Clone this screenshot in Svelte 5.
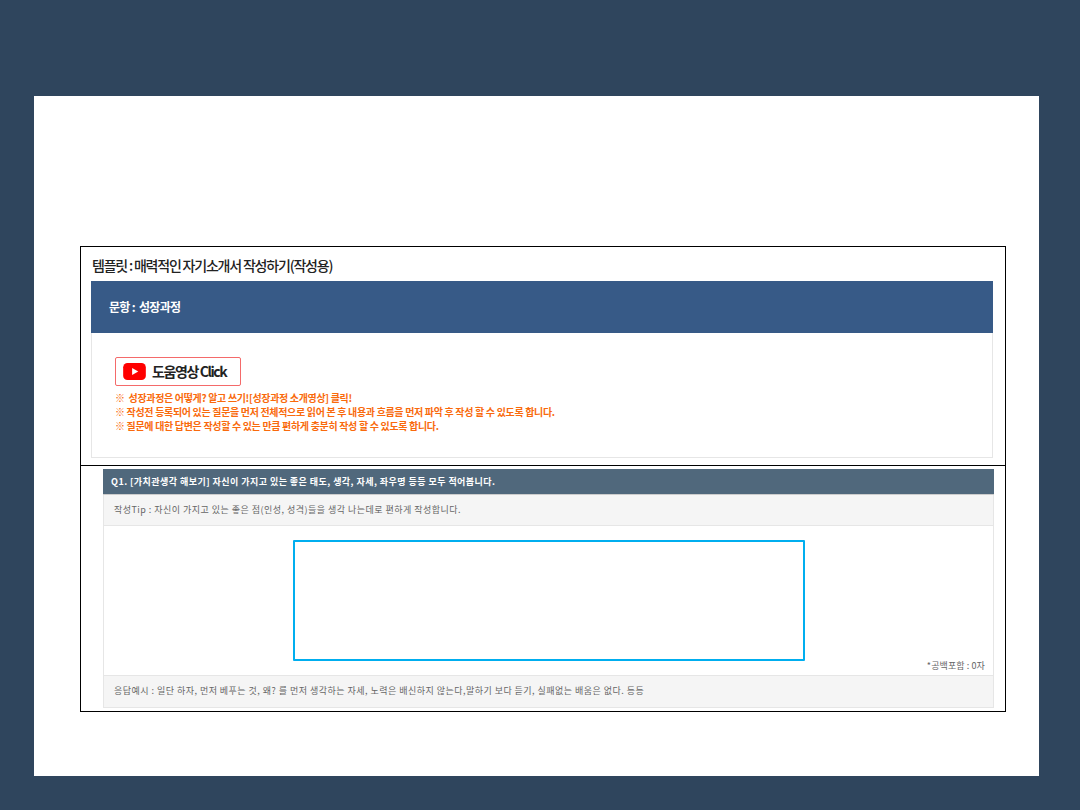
<script>
    const notes = [
        "※  성장과정은 어떻게? 알고 쓰기![성장과정 소개영상] 클릭!",
        "※ 작성전 등록되어 있는 질문을 먼저 전체적으로 읽어 본 후 내용과 흐름을 먼저 파악 후 작성 할 수 있도록 합니다.",
        "※ 질문에 대한 답변은 작성할 수 있는 만큼 편하게 충분히 작성 할 수 있도록 합니다."
    ];
</script>

<div class="page">
    <div class="panel">
        <section class="template">
            <h1>템플릿 : 매력적인 자기소개서 작성하기(작성용)</h1>
            <div class="banner">문항 :&nbsp; 성장과정</div>
            <div class="guide">
                <button class="help">
                    <svg width="23" height="17" viewBox="0 0 24 18">
                        <rect width="24" height="18" rx="4.5" fill="#ff0000" />
                        <path d="M9.5 5.2 L16 9 L9.5 12.8 Z" fill="#fff" />
                    </svg>
                    <span>도움영상 Click</span>
                </button>
                {#each notes as note}
                    <p class="note">{note}</p>
                {/each}
            </div>
        </section>
        <section class="question">
            <div class="q-card">
                <div class="q-title">Q1. [가치관생각 해보기] 자신이 가지고 있는 좋은 태도, 생각, 자세, 좌우명 등등 모두 적어봅니다.</div>
                <div class="q-tip">작성Tip : 자신이 가지고 있는 좋은 점(인성, 성격)들을 생각 나는데로 편하게 작성합니다.</div>
                <div class="q-body">
                    <div class="answer"></div>
                    <div class="count">*공백포함 : 0자</div>
                </div>
                <div class="q-example">응답예시 : 일단 하자, 먼저 베푸는 것, 왜? 를 먼저 생각하는 자세, 노력은 배신하지 않는다,말하기 보다 듣기, 실패없는 배움은 없다. 등등</div>
            </div>
        </section>
    </div>
</div>

<style>
    :global(body) {
        background: #2f455d;
    }

    .page {
        height: 810px;
        box-sizing: border-box;
        padding: 96px 41px 34px 34px;
        font-family: "Noto Sans CJK KR", "Liberation Sans", sans-serif;
    }

    .panel {
        height: 680px;
        box-sizing: border-box;
        background: #ffffff;
        padding: 150px 33px 0 46px;
    }

    .template {
        height: 220px;
        box-sizing: border-box;
        border: 1px solid #000000;
        padding: 0 12px 0 10px;
    }

    h1 {
        margin: 0;
        height: 34px;
        line-height: 37px;
        padding-left: 1px;
        font-size: 14px;
        font-weight: 500;
        letter-spacing: -1.2px;
        color: #222222;
    }

    .banner {
        height: 52px;
        line-height: 52px;
        padding-left: 18px;
        background: #375a87;
        color: #ffffff;
        font-size: 12px;
        font-weight: 700;
        letter-spacing: -0.7px;
    }

    .guide {
        height: 125px;
        box-sizing: border-box;
        border: 1px solid #e6e6e6;
        border-top: 0;
        padding: 24px 23px 0;
    }

    .help {
        display: flex;
        align-items: center;
        gap: 6px;
        width: 126px;
        height: 29px;
        box-sizing: border-box;
        margin: 0 0 5px;
        padding: 0 0 1px 7px;
        background: #ffffff;
        border: 1px solid #f46a6a;
        border-radius: 2px;
        font-family: inherit;
        font-size: 14px;
        font-weight: 700;
        letter-spacing: -1.4px;
        color: #222222;
    }

    .note {
        margin: 0;
        height: 14px;
        line-height: 14px;
        font-size: 10px;
        font-weight: 700;
        letter-spacing: -0.33px;
        color: #f96a0c;
        white-space: pre;
    }

    .question {
        height: 247px;
        box-sizing: border-box;
        margin-top: -1px;
        border: 1px solid #000000;
        padding: 3px 11px 0 22px;
    }

    .q-card {
        border: 1px solid #e6e6e6;
        border-top: 0;
    }

    .q-title {
        height: 26px;
        line-height: 25px;
        margin: 0 -1px;
        padding-left: 8px;
        box-sizing: border-box;
        background: #50687c;
        border-bottom: 1px solid #cccccc;
        color: #ffffff;
        font-size: 9px;
        font-weight: 700;
        letter-spacing: 0.45px;
        white-space: nowrap;
    }

    .q-tip,
    .q-example {
        box-sizing: border-box;
        background: #f5f5f5;
        color: #666666;
        font-size: 9px;
        letter-spacing: 0.47px;
        white-space: nowrap;
    }

    .q-tip {
        height: 31px;
        line-height: 30px;
        padding-left: 10px;
        border-bottom: 1px solid #e6e6e6;
    }

    .q-body {
        height: 150px;
        box-sizing: border-box;
        padding-top: 14px;
        border-bottom: 1px solid #e6e6e6;
    }

    .answer {
        width: 512px;
        height: 121px;
        box-sizing: border-box;
        margin-left: 189px;
        border: 2px solid #00aeef;
        border-radius: 1px;
    }

    .count {
        margin-top: -2px;
        padding-right: 8px;
        text-align: right;
        line-height: 13px;
        font-size: 9px;
        letter-spacing: 0.1px;
        color: #666666;
    }

    .q-example {
        height: 31px;
        line-height: 30px;
        padding-left: 10px;
    }
</style>
